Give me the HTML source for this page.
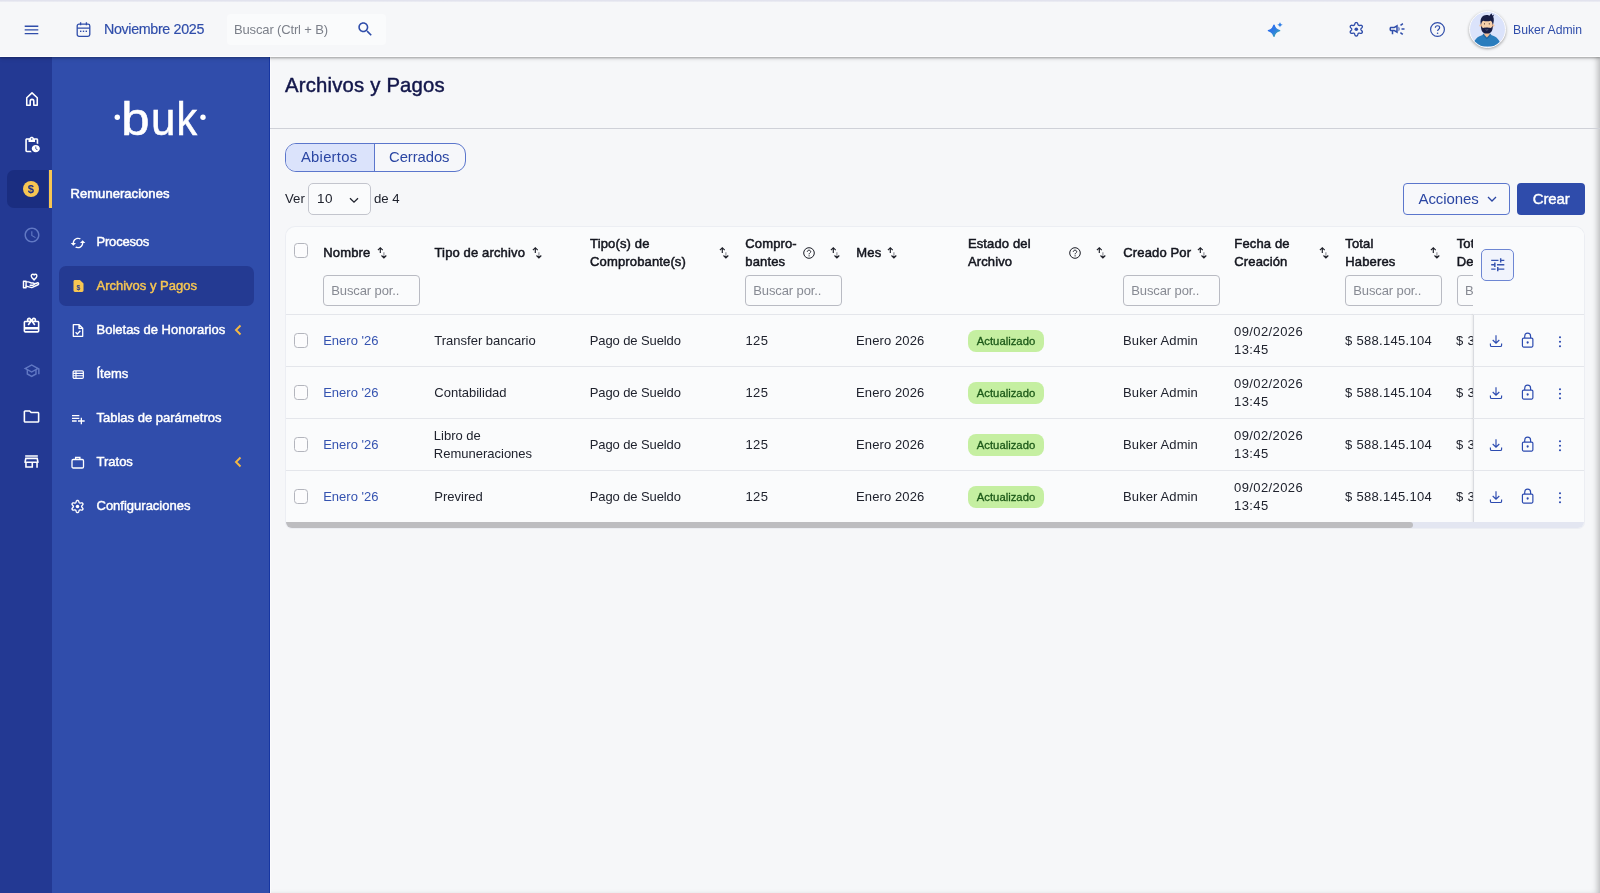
<!DOCTYPE html>
<html lang="es">
<head>
<meta charset="utf-8">
<title>Archivos y Pagos</title>
<style>
*{box-sizing:border-box;margin:0;padding:0}
html,body{width:1600px;height:893px;overflow:hidden}
body{opacity:.9999;font-family:"Liberation Sans",sans-serif;font-size:13px;line-height:18px;color:#20232e;background:#f6f7f9;position:relative}
svg{display:block;position:absolute;overflow:visible}
.t{position:absolute;white-space:nowrap}
.sb{-webkit-text-stroke:.45px currentColor}
.b{-webkit-text-stroke:.55px currentColor}
/* top bar */
#top{position:absolute;left:0;top:0;width:1600px;height:57px;background:#f6f7f9;box-shadow:0 1px 2px rgba(0,0,0,.25),0 2px 4px rgba(0,0,0,.10);z-index:10;color:#2f4daa}
#top .l1{position:absolute;left:0;top:0;width:1600px;height:2px;background:linear-gradient(#e2e3ee 0,#e2e3ee 55%,#f3f4f8 100%)}
#top .l2{position:absolute;left:0;top:56px;width:1600px;height:1px;background:#fdfdfe}
#top .t{will-change:transform}
#search{position:absolute;left:226.500px;top:14px;width:159.500px;height:30.500px;background:#fafbfc;border-radius:4px}
#avatar{position:absolute;left:1469px;top:11px;width:37px;height:37px;border-radius:50%;background:#dbe3fb;border:1.5px solid #fdfdfe;box-shadow:0 1px 3px rgba(0,0,0,.35);overflow:hidden}
/* strip + sidebar */
#strip{position:absolute;left:0;top:57px;width:52px;height:836px;background:#233993}
#side{position:absolute;left:52px;top:57px;width:218px;height:836px;background:#304dab;color:#fff;border-right:1px solid #1636a2;box-shadow:1px 0 0 #fbfbfd}
#strip .act{position:absolute;left:7.300px;top:113px;width:40.700px;height:38px;background:#1a2d80;border-radius:7px 0 0 7px}
#strip .bar{position:absolute;left:49px;top:113px;width:3px;height:38px;background:#f7c652}
#side .sel{position:absolute;left:7px;top:209px;width:195px;height:40px;background:#243a92;border-radius:7px}
#side .t{left:44.500px;font-size:13px}
/* content */
#content{position:absolute;left:270px;top:57px;width:1330px;height:836px;background:#f6f7f9;box-shadow:inset -5px 0 6px -3px rgba(0,0,0,.27)}
#title{left:285px;top:71px;font-size:20.3px;line-height:28px;color:#12164a;letter-spacing:.2px;-webkit-text-stroke:.45px #12164a}
#hr{position:absolute;left:270px;top:128px;width:1330px;height:1px;background:#cfd1d8}
#tabs{position:absolute;left:285px;top:143px;width:181px;height:29px;border:1px solid #5b76cc;border-radius:11px;overflow:hidden;background:#f6f7fa}
#tabs .on{position:absolute;left:0;top:0;width:89px;height:27px;background:#dbe3fb;border-right:1px solid #5b76cc}
.btn{position:absolute;top:183px;height:32px;border-radius:4px}
#card{position:absolute;left:286px;top:227px;width:1298px;height:301px;background:#fafbfc;box-shadow:0 0 0 1px #eceef3;border-radius:9px 9px 6px 6px;overflow:hidden}
.hl{position:absolute;left:0;width:1298px;height:1px;background:#e4e6eb}
.cb{position:absolute;left:7.500px;width:14.500px;height:14.500px;border:1px solid #b3b5bd;border-radius:3.5px;background:#fcfcfd}
.inp{position:absolute;top:48px;width:97px;height:31px;letter-spacing:-.12px;border:1px solid #b9bbc3;border-radius:4px;background:#fafbfc;color:#878a93;padding:6px 0 0 7.300px;white-space:nowrap;overflow:hidden}
.th{position:absolute;white-space:nowrap;color:#14161f;letter-spacing:.14px;-webkit-text-stroke:.5px #14161f}
.td{position:absolute;white-space:nowrap}
.lnk{color:#3553b0}
.badge{position:absolute;left:682px;width:76px;height:22px;border-radius:8px;background:#c5efa1;color:#1d5a19;font-size:11.3px;line-height:22px;text-align:center;-webkit-text-stroke:.3px #1d5a19}
#sticky{position:absolute;left:1187px;top:0;width:111px;height:296px;background:#fafbfc}
#sticky .vl{position:absolute;left:0;top:87px;width:1px;height:209px;background:#d9dbe0;box-shadow:-1px 0 2px rgba(0,0,0,.10)}
#tune{position:absolute;left:8px;top:22px;width:33px;height:32px;border:1px solid #6d86d3;border-radius:5px;background:#f1f4fc}
#sbar{position:absolute;left:0;top:295px;width:1298px;height:7px;background:#e3e6f1}
#sbar i{position:absolute;left:0;top:0;width:1127px;height:6px;border-radius:0 3px 3px 0;background:#bdbdc0}
</style>
</head>
<body>
<div id="content"></div>
<div id="top">
<div class="l1"></div><div class="l2"></div>
<svg style="left:20px;top:18px" width="24" height="24" viewBox="0 0 24 24"><path fill="none" stroke="#2f4daa" stroke-width="1.4" d="M4.7 8.2h13.6M4.7 11.9h13.6M4.7 15.6h13.6"/></svg>
<svg style="left:74px;top:20px" width="20" height="20" viewBox="0 0 20 20"><g fill="none" stroke="#2f4daa" stroke-width="1.3"><rect x="3.2" y="4.1" width="12.6" height="12.2" rx="1.8"/><path d="M3.2 8.1h12.6M6.6 2.3v3M12.4 2.3v3"/></g><g fill="#2f4daa"><rect x="6" y="10.6" width="1.4" height="1.4"/><rect x="8.8" y="10.6" width="1.4" height="1.4"/><rect x="11.6" y="10.6" width="1.4" height="1.4"/></g></svg>
<div class="t" id="month" style="left:104px;top:20px;font-size:14.3px;letter-spacing:-.35px;-webkit-text-stroke:.18px #2f4daa">Noviembre 2025</div>
<div id="search"></div>
<div class="t" id="stext" style="left:234px;top:20.500px;font-size:13px;letter-spacing:-.15px;color:#7c808a">Buscar (Ctrl + B)</div>
<svg style="left:355.500px;top:20.300px" width="18.500" height="18.500" viewBox="0 0 24 24"><path fill="#2f4daa" d="M15.5 14h-.79l-.28-.27C15.41 12.59 16 11.11 16 9.5 16 5.91 13.09 3 9.500 3S3 5.910 3 9.500 5.910 16 9.500 16c1.610 0 3.090-.590 4.230-1.570l.27.280v.790l5 4.990L20.490 19l-4.990-5zm-6 0C7.010 14 5 11.990 5 9.500S7.010 5 9.500 5 14 7.010 14 9.500 11.990 14 9.500 14z"/></svg>
<svg style="left:1265px;top:20px" width="20" height="20" viewBox="0 0 20 20"><defs><linearGradient id="sg" x1="0" y1="0" x2="1" y2="1"><stop offset="0" stop-color="#2563f5"/><stop offset=".55" stop-color="#2f80e0"/><stop offset="1" stop-color="#3fb59a"/></linearGradient></defs><path fill="url(#sg)" d="M9 5.200C9.800 8.200 11.400 9.800 14.600 10.700 11.400 11.600 9.800 13.200 9 16.200 8.200 13.200 6.600 11.600 3.400 10.700 6.600 9.800 8.200 8.200 9 5.200Z" stroke="url(#sg)" stroke-width="1.400" stroke-linejoin="round"/><path fill="#2f7fe6" d="M15 1.900C15.300 3.500 16 4.300 17.800 4.700 16 5.100 15.300 5.900 15 7.500 14.700 5.900 14 5.100 12.200 4.700 14 4.300 14.700 3.500 15 1.900Z"/></svg>
<svg style="left:1348px;top:21.200px" width="16.600" height="16.600" viewBox="0 0 24 24"><path fill="none" stroke="#2f4daa" stroke-width="1.900" stroke-linejoin="round" d="M12.0 2.2L12.8 2.4L13.6 2.9L14.1 4.1L14.4 5.3L14.8 5.9L15.3 6.3L15.9 6.5L16.6 6.5L17.8 6.2L19.1 6.1L19.9 6.5L20.5 7.1L20.8 7.9L20.7 8.8L19.9 9.9L19.0 10.8L18.7 11.4L18.6 12.0L18.7 12.6L19.0 13.2L19.9 14.1L20.7 15.2L20.8 16.1L20.5 16.9L19.9 17.5L19.1 17.9L17.8 17.8L16.6 17.5L15.9 17.5L15.3 17.7L14.8 18.1L14.4 18.7L14.1 19.9L13.6 21.1L12.8 21.6L12.0 21.8L11.2 21.6L10.4 21.1L9.9 19.9L9.6 18.7L9.2 18.1L8.7 17.7L8.1 17.5L7.4 17.5L6.2 17.8L4.9 17.9L4.1 17.5L3.5 16.9L3.2 16.1L3.3 15.2L4.1 14.1L5.0 13.2L5.3 12.6L5.4 12.0L5.3 11.4L5.0 10.8L4.1 9.9L3.3 8.8L3.2 7.9L3.5 7.1L4.1 6.5L4.9 6.1L6.2 6.2L7.4 6.5L8.1 6.5L8.7 6.3L9.2 5.9L9.6 5.3L9.9 4.1L10.4 2.9L11.2 2.4Z"/><circle cx="12" cy="12" r="2.600" fill="#2f4daa"/></svg>
<svg style="left:1388px;top:20px" width="18" height="18" viewBox="0 0 24 24"><path fill="#2f4daa" d="M18 11v2h4v-2h-4zm-2 6.610c.960.710 2.210 1.650 3.200 2.390.4-.530.8-1.070 1.200-1.600-.990-.740-2.240-1.680-3.200-2.400-.4.540-.8 1.080-1.200 1.610zM20.400 5.600c-.4-.530-.8-1.070-1.200-1.600-.990.740-2.240 1.680-3.200 2.400.4.530.8 1.070 1.200 1.600.960-.720 2.210-1.650 3.200-2.400zM4 9c-1.100 0-2 .9-2 2v2c0 1.100.9 2 2 2h1v4h2v-4h1l5 3V6L8 9H4zm5.030 1.710L11 9.530v4.940l-1.970-1.180-.480-.290H4v-2h4.550l.480-.290zM15.500 12c0-1.330-.580-2.530-1.500-3.350v6.690c.920-.810 1.500-2.010 1.500-3.340z"/></svg>
<svg style="left:1428px;top:20px" width="19" height="19" viewBox="0 0 24 24"><circle cx="12" cy="12" r="8.700" fill="none" stroke="#2f4daa" stroke-width="1.500"/><path fill="none" stroke="#2f4daa" stroke-width="1.500" d="M9.300 9.900c0-1.600 1.200-2.600 2.700-2.600s2.700 1 2.700 2.400c0 1.900-2.600 2.100-2.600 4.300"/><circle cx="12.100" cy="16.700" r="1" fill="#2f4daa"/></svg>
<div id="avatar"><svg style="left:0;top:0" width="34" height="34" viewBox="0 0 34 34"><path fill="#2a7dbd" d="M3 34.500c.4-6.400 4.300-10.200 9.600-11.600l4.300 2.600 4.300-2.600c5.300 1.400 9.200 5.200 9.600 11.600z"/><path fill="#1f66a3" d="M12.400 23l4.500 4.300 4.500-4.300-1.300-1.500h-6.400z"/><path fill="#f0bf98" d="M14.300 18.500h5.200v4.300l-2.600 2.600-2.600-2.600z"/><rect x="11.100" y="6" width="11.600" height="14" rx="5" fill="#f6cfa9"/><circle cx="10.700" cy="13.500" r="1.300" fill="#f0bd95"/><circle cx="23.100" cy="13.500" r="1.300" fill="#f0bd95"/><path fill="#171d45" d="M11.100 13.200c-.3 4.700 1 8.400 5.800 8.400s6.100-3.700 5.800-8.400c-.5 1.600-1.300 2.500-2.300 2.800-1.500-.8-5.500-.8-7 0-1-.3-1.800-1.200-2.300-2.800z"/><path fill="#171d45" d="M11 13.300C9.500 7.500 11.600 3 16.600 3c1.400 0 2.300.3 3 .8.400-1.300 1.300-2.100 2.600-2.400-.4.800-.4 1.500-.1 2.100.6-.6 1.300-.9 2.200-.8-.8.600-1.100 1.300-1.100 2.100 1 2.200.8 5.100-.4 8.500-.3-2.100-.8-3.600-2-4.500-2.500.7-5.300.7-7.700 0-1.200.9-1.800 2.400-2.100 4.500z"/><circle cx="14.500" cy="11.800" r=".6" fill="#3a2a2a"/><circle cx="19.300" cy="11.800" r=".6" fill="#3a2a2a"/><path fill="#dfe6f2" d="M15.300 17.500c1 .6 2.200.6 3.200 0-.5.900-2.700.9-3.200 0z"/></svg></div>
<div class="t" id="uname" style="left:1513px;top:21px;font-size:12.2px">Buker Admin</div>
</div>
<div id="strip">
<div class="act"></div><div class="bar"></div>
<svg style="left:22.600px;top:33.300px" width="18" height="18" viewBox="0 0 24 24"><path fill="none" stroke="#fff" stroke-width="2.100" stroke-linejoin="round" d="M5 10.300L12 3.800l7 6.500V20.300h-4.600v-5.400c0-1.400-1-2.400-2.400-2.400s-2.400 1-2.400 2.400v5.400H5z"/></svg>
<svg style="left:21.500px;top:78.800px" width="19.500" height="17.800" viewBox="0 0 24 24" preserveAspectRatio="none"><path fill="#fff" d="M17 12c-2.760 0-5 2.240-5 5s2.240 5 5 5 5-2.240 5-5-2.240-5-5-5zm1.650 7.350L16.500 17.200V14h1v2.790l1.850 1.850-.7.710zM18 3h-3.180C14.400 1.840 13.300 1 12 1s-2.400.840-2.820 2H6c-1.100 0-2 .9-2 2v15c0 1.100.9 2 2 2h6.110c-.590-.570-1.070-1.250-1.420-2H6V5h2v3h8V5h2v5.080c.710.100 1.380.310 2 .6V5c0-1.100-.9-2-2-2zm-6 2c-.550 0-1-.450-1-1s.450-1 1-1 1 .450 1 1-.450 1-1 1z"/></svg>
<svg style="left:23.100px;top:123.900px" width="16" height="16" viewBox="0 0 16 16"><circle cx="8" cy="8" r="8" fill="#f7c652"/><text x="8" y="12" text-anchor="middle" font-family="Liberation Sans, sans-serif" font-size="11.300" font-weight="bold" fill="#1f3186">$</text></svg>
<svg style="left:22.500px;top:169.200px" width="18" height="18" viewBox="0 0 24 24"><path fill="#6178c4" d="M11.990 2C6.470 2 2 6.480 2 12s4.470 10 9.990 10C17.520 22 22 17.520 22 12S17.520 2 11.990 2zM12 20c-4.420 0-8-3.580-8-8s3.580-8 8-8 8 3.580 8 8-3.580 8-8 8zm.5-13H11v6l5.250 3.150.75-1.230-4.500-2.670z"/></svg>
<svg style="left:22.300px;top:214.700px" width="17.800" height="18.500" preserveAspectRatio="none" viewBox="0 0 24 24"><g fill="none" stroke="#fff" stroke-width="1.900" stroke-linejoin="round" stroke-linecap="round"><path d="M16.300 10.200c-1.900-1.700-3.800-3.300-3.800-5.100 0-1.300 1-2.200 2.100-2.200.8 0 1.400.4 1.700 1 .3-.6.900-1 1.700-1 1.100 0 2.100.9 2.100 2.200 0 1.800-1.900 3.400-3.800 5.100z"/><rect x="2" y="12" width="3.500" height="8.500"/><path d="M5.500 12.800h3.200c1.500 0 2.300 1.500 4 1.500h2.300c.9 0 1.500.6 1.500 1.400s-.6 1.400-1.500 1.400h-4"/><path d="M16.500 15.600l4-1.400c.8-.3 1.600.1 1.900.8.200.6-.1 1.300-.8 1.600l-7.600 3.300c-.7.300-1.400.3-2.100.1l-6.400-1.700"/></g></svg>
<svg style="left:22.200px;top:259.300px" width="19" height="19" viewBox="0 0 24 24"><path fill="#fff" d="M20 6h-2.180c.110-.310.180-.650.180-1 0-1.660-1.340-3-3-3-1.050 0-1.960.540-2.500 1.350l-.5.670-.5-.680C10.960 2.540 10.050 2 9 2 7.340 2 6 3.340 6 5c0 .350.070.690.180 1H4c-1.110 0-1.990.890-1.990 2L2 19c0 1.110.890 2 2 2h16c1.110 0 2-.890 2-2V8c0-1.110-.890-2-2-2zm-5-2c.550 0 1 .450 1 1s-.450 1-1 1-1-.450-1-1 .450-1 1-1zM9 4c.550 0 1 .450 1 1s-.450 1-1 1-1-.450-1-1 .450-1 1-1zm11 15H4v-2h16v2zm0-5H4V8h5.080L7 10.830 8.620 12 11 8.760l1-1.360 1 1.360L15.380 12 17 10.830 14.920 8H20v6z"/></svg>
<svg style="left:23.200px;top:304.800px" width="17.300" height="17.300" viewBox="0 0 24 24"><path fill="#6178c4" d="M12 3L1 9l4 2.180v6L12 21l7-3.820v-6l2-1.090V17h2V9L12 3zm6.820 6L12 12.720 5.180 9 12 5.280 18.820 9zM17 15.990l-5 2.730-5-2.730v-3.720L12 15l5-2.730v3.720z"/></svg>
<svg style="left:22.200px;top:349.800px" width="19" height="19" viewBox="0 0 24 24"><path fill="#fff" d="M9.170 6l2 2H20v10H4V6h5.170M10 4H4c-1.100 0-1.990.9-1.990 2L2 18c0 1.100.9 2 2 2h16c1.100 0 2-.9 2-2V8c0-1.100-.9-2-2-2h-8l-2-2z"/></svg>
<svg style="left:22.200px;top:394.600px" width="19" height="19" viewBox="0 0 24 24"><path fill="#fff" d="M18.360 9l.6 3H5.040l.6-3h12.720M20 4H4v2h16V4zm0 3H4l-1 5v2h1v6h10v-6h4v6h2v-6h1v-2l-1-5zM6 18v-4h6v4H6z"/></svg>
</div>
<div id="side">
<div class="sel"></div>
<svg style="left:51px;top:33px" width="120" height="56" viewBox="0 0 120 56"><circle cx="14.300" cy="27.300" r="2.700" fill="#fff"/><circle cx="100" cy="27.300" r="2.700" fill="#fff"/><g id="logo" font-family="Liberation Sans, sans-serif" font-size="46.300" fill="#fff" stroke="#fff" stroke-width=".55"><text transform="translate(18.200 44.600) scale(1.100 1)">b</text><text transform="translate(48.100 44.600) scale(.950 1)">u</text><text transform="translate(73.400 44.600) scale(.890 1)">k</text></g></svg>
<div class="t b" id="rem" style="left:18.500px;top:128.300px;letter-spacing:.05px">Remuneraciones</div>
<svg style="left:17.500px;top:177.500px" width="16" height="16" viewBox="0 0 24 24"><path fill="#fff" d="M19 8l-4 4h3c0 3.310-2.690 6-6 6-1.010 0-1.970-.250-2.800-.7l-1.460 1.460C8.970 19.540 10.430 20 12 20c4.420 0 8-3.580 8-8h3l-4-4zM6 12c0-3.310 2.690-6 6-6 1.010 0 1.970.250 2.800.7l1.460-1.460C15.030 4.460 13.570 4 12 4c-4.420 0-8 3.580-8 8H1l4 4 4-4H6z"/></svg>
<div class="t sb" style="top:176px;letter-spacing:-.2px">Procesos</div>
<svg style="left:19.500px;top:222.300px" width="13" height="14" viewBox="0 0 14 15"><path fill="#f7c652" d="M3.200 1h5.300L12.400 4.900V12.400c0 .9-.7 1.600-1.600 1.600H3.200c-.9 0-1.600-.7-1.600-1.600V2.600C1.600 1.700 2.300 1 3.200 1z"/><text x="7" y="11.600" text-anchor="middle" font-family="Liberation Sans, sans-serif" font-size="7.500" font-weight="bold" fill="#243a92">$</text></svg>
<div class="t sb" style="top:220px;color:#f7c652">Archivos y Pagos</div>
<svg style="left:19px;top:266px" width="14" height="15" viewBox="0 0 14 15"><path fill="none" stroke="#fff" stroke-width="1.300" stroke-linejoin="round" d="M2.300 1.700h5.900l3.500 3.500v8.100H2.300zM8 1.900v3.500h3.500"/><path fill="none" stroke="#fff" stroke-width="1.300" d="M4.600 9.300l1.700 1.700 3.100-3.300"/></svg>
<div class="t sb" style="top:264px">Boletas de Honorarios</div>
<svg style="left:181.300px;top:267px" width="10" height="12" viewBox="0 0 10 12"><path fill="none" stroke="#f5b942" stroke-width="1.900" d="M7.500 1.500L3 6l4.500 4.500"/></svg>
<svg style="left:19.500px;top:311.500px" width="13" height="11.200" viewBox="0 0 14 12"><rect x="1.200" y="2" width="11" height="8" rx="1.200" fill="none" stroke="#fff" stroke-width="1.300"/><path stroke="#fff" stroke-width="1.200" d="M1.200 4.700h11M1.200 7.300h11M4.300 2v8"/></svg>
<div class="t sb" style="top:308px">Ítems</div>
<svg style="left:18px;top:354px" width="16" height="16" viewBox="0 0 24 24"><path fill="#fff" d="M14 10H3v2h11v-2zm0-4H3v2h11V6zm4 8v-4h-2v4h-4v2h4v4h2v-4h4v-2h-4zM3 16h7v-2H3v2z"/></svg>
<div class="t sb" style="top:352px">Tablas de parámetros</div>
<svg style="left:18px;top:398px" width="16" height="15" viewBox="0 0 16 15"><rect x="2" y="4.500" width="11.500" height="8.500" rx="1.200" fill="none" stroke="#fff" stroke-width="1.300"/><path fill="none" stroke="#fff" stroke-width="1.300" d="M5.600 4.500V2.500h4.300v2"/></svg>
<div class="t sb" style="top:396px">Tratos</div>
<svg style="left:181.300px;top:399px" width="10" height="12" viewBox="0 0 10 12"><path fill="none" stroke="#f5b942" stroke-width="1.900" d="M7.500 1.500L3 6l4.500 4.500"/></svg>
<svg style="left:18px;top:442px" width="15" height="15" viewBox="0 0 24 24"><path fill="none" stroke="#fff" stroke-width="2.100" stroke-linejoin="round" d="M12.0 2.2L12.8 2.4L13.6 2.9L14.1 4.1L14.4 5.3L14.8 5.9L15.3 6.3L15.9 6.5L16.6 6.5L17.8 6.2L19.1 6.1L19.9 6.5L20.5 7.1L20.8 7.9L20.7 8.8L19.9 9.9L19.0 10.8L18.7 11.4L18.6 12.0L18.7 12.6L19.0 13.2L19.9 14.1L20.7 15.2L20.8 16.1L20.5 16.9L19.9 17.5L19.1 17.9L17.8 17.8L16.6 17.5L15.9 17.5L15.3 17.7L14.8 18.1L14.4 18.7L14.1 19.9L13.6 21.1L12.8 21.6L12.0 21.8L11.2 21.6L10.4 21.1L9.9 19.9L9.6 18.7L9.2 18.1L8.7 17.7L8.1 17.5L7.4 17.5L6.2 17.8L4.9 17.9L4.1 17.5L3.5 16.9L3.2 16.1L3.3 15.2L4.1 14.1L5.0 13.2L5.3 12.6L5.4 12.0L5.3 11.4L5.0 10.8L4.1 9.9L3.3 8.8L3.2 7.9L3.5 7.1L4.1 6.5L4.9 6.1L6.2 6.2L7.4 6.5L8.1 6.5L8.7 6.3L9.2 5.9L9.6 5.3L9.9 4.1L10.4 2.9L11.2 2.4Z"/><circle cx="12" cy="12" r="2.800" fill="#fff"/></svg>
<div class="t sb" style="top:440px">Configuraciones</div>
</div>
<div class="t" id="title">Archivos y Pagos</div>
<div id="hr"></div>
<div id="tabs"><div class="on"></div><div class="t blue" id="tab1" style="left:15px;top:4px;font-size:14.8px;letter-spacing:.25px;color:#2b46a3">Abiertos</div><div class="t" id="tab2" style="left:103px;top:4px;font-size:14.8px;letter-spacing:-.05px;color:#2b46a3">Cerrados</div></div>
<div class="t" id="ver" style="left:285px;top:189.500px;font-size:13.2px">Ver</div>
<div id="sel" style="position:absolute;left:308px;top:183px;width:63px;height:32px;border:1px solid #c3c5cd;border-radius:5px;background:#fafbfc"><div class="t" style="left:8px;top:6px;font-size:13.5px;letter-spacing:.4px">10</div><svg style="left:40px;top:12.500px" width="10" height="7" viewBox="0 0 10 7"><path fill="none" stroke="#20232e" stroke-width="1.300" d="M1 1.200l4 4 4-4"/></svg></div>
<div class="t" id="de4" style="left:374px;top:189.500px;font-size:13.2px">de 4</div>
<div class="btn" id="acc" style="left:1403px;width:107px;border:1px solid #5b76cc;background:#f7f8fb"><div class="t" id="acct" style="left:14.500px;top:5.500px;font-size:15px;letter-spacing:-.1px;color:#2b46a3">Acciones</div><svg style="left:83px;top:12px" width="10" height="7" viewBox="0 0 10 7"><path fill="none" stroke="#2b46a3" stroke-width="1.300" d="M1 1l4 4 4-4"/></svg></div>
<div class="btn" id="crear" style="left:1517px;width:68px;background:#2f4cab"><div class="t" id="creart" style="left:15.800px;top:6.500px;font-size:15px;letter-spacing:-.15px;color:#fff;-webkit-text-stroke:.4px #fff">Crear</div></div>
<div id="card"><div class="cb" style="top:16px"></div>
<div class="th" style="left:37.3px;top:17px">Nombre</div>
<svg style="left:91.2px;top:20px" width="10" height="12" viewBox="0 0 10 12"><g fill="none" stroke-width="1.15"><path stroke="#1b1d26" d="M3.300 6V.7M.9 3.100L3.300 .7 5.700 3.100"/><path stroke="#8d8f96" d="M6.900 5.200v4"/><path stroke="#1b1d26" d="M6.900 9v1.900M4.500 8.500l2.400 2.400 2.400-2.400"/></g></svg>
<div class="th" style="left:148.5px;top:17px">Tipo de archivo</div>
<svg style="left:245.9px;top:20px" width="10" height="12" viewBox="0 0 10 12"><g fill="none" stroke-width="1.15"><path stroke="#1b1d26" d="M3.300 6V.7M.9 3.100L3.300 .7 5.700 3.100"/><path stroke="#8d8f96" d="M6.900 5.200v4"/><path stroke="#1b1d26" d="M6.900 9v1.900M4.500 8.500l2.400 2.400 2.400-2.400"/></g></svg>
<div class="th" style="left:304.1px;top:7.500px">Tipo(s) de<br>Comprobante(s)</div>
<svg style="left:432.9px;top:20px" width="10" height="12" viewBox="0 0 10 12"><g fill="none" stroke-width="1.15"><path stroke="#1b1d26" d="M3.300 6V.7M.9 3.100L3.300 .7 5.700 3.100"/><path stroke="#8d8f96" d="M6.900 5.200v4"/><path stroke="#1b1d26" d="M6.900 9v1.900M4.500 8.500l2.400 2.400 2.400-2.400"/></g></svg>
<div class="th" style="left:459.3px;top:7.500px">Compro-<br>bantes</div>
<svg style="left:516.5px;top:20px" width="12" height="12" viewBox="0 0 12 12"><circle cx="6" cy="6" r="5.300" fill="none" stroke="#1b1d26" stroke-width="1"/><path fill="none" stroke="#1b1d26" stroke-width="1" d="M4.300 4.800c0-1 .8-1.600 1.700-1.600s1.700.6 1.700 1.500c0 1.200-1.600 1.300-1.600 2.600"/><circle cx="6.100" cy="8.800" r=".65" fill="#1b1d26"/></svg>
<svg style="left:543.9px;top:20px" width="10" height="12" viewBox="0 0 10 12"><g fill="none" stroke-width="1.15"><path stroke="#1b1d26" d="M3.300 6V.7M.9 3.100L3.300 .7 5.700 3.100"/><path stroke="#8d8f96" d="M6.900 5.200v4"/><path stroke="#1b1d26" d="M6.900 9v1.900M4.500 8.500l2.400 2.400 2.400-2.400"/></g></svg>
<div class="th" style="left:570.3px;top:17px">Mes</div>
<svg style="left:600.9px;top:20px" width="10" height="12" viewBox="0 0 10 12"><g fill="none" stroke-width="1.15"><path stroke="#1b1d26" d="M3.300 6V.7M.9 3.100L3.300 .7 5.700 3.100"/><path stroke="#8d8f96" d="M6.900 5.200v4"/><path stroke="#1b1d26" d="M6.900 9v1.900M4.500 8.500l2.400 2.400 2.400-2.400"/></g></svg>
<div class="th" style="left:681.9px;top:7.500px">Estado del<br>Archivo</div>
<svg style="left:783.3px;top:20px" width="12" height="12" viewBox="0 0 12 12"><circle cx="6" cy="6" r="5.300" fill="none" stroke="#1b1d26" stroke-width="1"/><path fill="none" stroke="#1b1d26" stroke-width="1" d="M4.300 4.800c0-1 .8-1.600 1.700-1.600s1.700.6 1.700 1.500c0 1.200-1.600 1.300-1.600 2.600"/><circle cx="6.100" cy="8.800" r=".65" fill="#1b1d26"/></svg>
<svg style="left:809.9px;top:20px" width="10" height="12" viewBox="0 0 10 12"><g fill="none" stroke-width="1.15"><path stroke="#1b1d26" d="M3.300 6V.7M.9 3.100L3.300 .7 5.700 3.100"/><path stroke="#8d8f96" d="M6.900 5.200v4"/><path stroke="#1b1d26" d="M6.900 9v1.900M4.500 8.500l2.400 2.400 2.400-2.400"/></g></svg>
<div class="th" style="left:837.3px;top:17px">Creado Por</div>
<svg style="left:910.9px;top:20px" width="10" height="12" viewBox="0 0 10 12"><g fill="none" stroke-width="1.15"><path stroke="#1b1d26" d="M3.300 6V.7M.9 3.100L3.300 .7 5.700 3.100"/><path stroke="#8d8f96" d="M6.900 5.200v4"/><path stroke="#1b1d26" d="M6.900 9v1.900M4.500 8.500l2.400 2.400 2.400-2.400"/></g></svg>
<div class="th" style="left:948.3px;top:7.500px">Fecha de<br>Creación</div>
<svg style="left:1032.9px;top:20px" width="10" height="12" viewBox="0 0 10 12"><g fill="none" stroke-width="1.15"><path stroke="#1b1d26" d="M3.300 6V.7M.9 3.100L3.300 .7 5.700 3.100"/><path stroke="#8d8f96" d="M6.900 5.200v4"/><path stroke="#1b1d26" d="M6.900 9v1.900M4.500 8.500l2.400 2.400 2.400-2.400"/></g></svg>
<div class="th" style="left:1059.3px;top:7.500px">Total<br>Haberes</div>
<svg style="left:1143.6px;top:20px" width="10" height="12" viewBox="0 0 10 12"><g fill="none" stroke-width="1.15"><path stroke="#1b1d26" d="M3.300 6V.7M.9 3.100L3.300 .7 5.700 3.100"/><path stroke="#8d8f96" d="M6.900 5.200v4"/><path stroke="#1b1d26" d="M6.900 9v1.900M4.500 8.500l2.400 2.400 2.400-2.400"/></g></svg>
<div class="th" style="left:1170.7px;top:7.500px">Total<br>Descuentos</div>
<div class="inp" style="left:37px">Buscar por..</div>
<div class="inp" style="left:459px">Buscar por..</div>
<div class="inp" style="left:837px">Buscar por..</div>
<div class="inp" style="left:1059px">Buscar por..</div>
<div class="inp" style="left:1170.6px">Buscar por..</div>
<div class="hl" style="top:87px"></div>
<div class="cb" style="top:106px"></div>
<div class="td lnk" style="left:37.200px;top:104.5px">Enero '26</div>
<div class="td" style="left:148.300px;top:104.5px">Transfer bancario</div>
<div class="td" style="left:303.700px;top:104.5px;letter-spacing:-.1px">Pago de Sueldo</div>
<div class="td" style="left:459.400px;top:104.5px;letter-spacing:.4px">125</div>
<div class="td" style="left:570.100px;top:104.5px;letter-spacing:.1px">Enero 2026</div>
<div class="badge" style="top:103.0px">Actualizado</div>
<div class="td" style="left:837.100px;top:104.5px;letter-spacing:.1px">Buker Admin</div>
<div class="td" style="left:948px;top:95.5px;letter-spacing:.4px">09/02/2026<br>13:45</div>
<div class="td" style="left:1059px;top:104.5px;letter-spacing:.3px">$ 588.145.104</div>
<div class="td" style="left:1170px;top:104.5px;letter-spacing:.3px">$ 389.204.551</div>
<div class="hl" style="top:139px"></div>
<div class="cb" style="top:158px"></div>
<div class="td lnk" style="left:37.200px;top:156.5px">Enero '26</div>
<div class="td" style="left:148.300px;top:156.5px">Contabilidad</div>
<div class="td" style="left:303.700px;top:156.5px;letter-spacing:-.1px">Pago de Sueldo</div>
<div class="td" style="left:459.400px;top:156.5px;letter-spacing:.4px">125</div>
<div class="td" style="left:570.100px;top:156.5px;letter-spacing:.1px">Enero 2026</div>
<div class="badge" style="top:155.0px">Actualizado</div>
<div class="td" style="left:837.100px;top:156.5px;letter-spacing:.1px">Buker Admin</div>
<div class="td" style="left:948px;top:147.5px;letter-spacing:.4px">09/02/2026<br>13:45</div>
<div class="td" style="left:1059px;top:156.5px;letter-spacing:.3px">$ 588.145.104</div>
<div class="td" style="left:1170px;top:156.5px;letter-spacing:.3px">$ 389.204.551</div>
<div class="hl" style="top:191px"></div>
<div class="cb" style="top:210px"></div>
<div class="td lnk" style="left:37.200px;top:208.5px">Enero '26</div>
<div class="td" style="left:147.800px;top:199.5px">Libro de<br>Remuneraciones</div>
<div class="td" style="left:303.700px;top:208.5px;letter-spacing:-.1px">Pago de Sueldo</div>
<div class="td" style="left:459.400px;top:208.5px;letter-spacing:.4px">125</div>
<div class="td" style="left:570.100px;top:208.5px;letter-spacing:.1px">Enero 2026</div>
<div class="badge" style="top:207.0px">Actualizado</div>
<div class="td" style="left:837.100px;top:208.5px;letter-spacing:.1px">Buker Admin</div>
<div class="td" style="left:948px;top:199.5px;letter-spacing:.4px">09/02/2026<br>13:45</div>
<div class="td" style="left:1059px;top:208.5px;letter-spacing:.3px">$ 588.145.104</div>
<div class="td" style="left:1170px;top:208.5px;letter-spacing:.3px">$ 389.204.551</div>
<div class="hl" style="top:243px"></div>
<div class="cb" style="top:262px"></div>
<div class="td lnk" style="left:37.200px;top:260.5px">Enero '26</div>
<div class="td" style="left:148.300px;top:260.5px">Previred</div>
<div class="td" style="left:303.700px;top:260.5px;letter-spacing:-.1px">Pago de Sueldo</div>
<div class="td" style="left:459.400px;top:260.5px;letter-spacing:.4px">125</div>
<div class="td" style="left:570.100px;top:260.5px;letter-spacing:.1px">Enero 2026</div>
<div class="badge" style="top:259.0px">Actualizado</div>
<div class="td" style="left:837.100px;top:260.5px;letter-spacing:.1px">Buker Admin</div>
<div class="td" style="left:948px;top:251.5px;letter-spacing:.4px">09/02/2026<br>13:45</div>
<div class="td" style="left:1059px;top:260.5px;letter-spacing:.3px">$ 588.145.104</div>
<div class="td" style="left:1170px;top:260.5px;letter-spacing:.3px">$ 389.204.551</div>
<div id="sticky"><div class="vl"></div><div id="tune"><svg style="left:6.600px;top:6.200px" width="17.500" height="17.500" viewBox="0 0 24 24"><path fill="#3553b0" d="M3 17v2h6v-2H3zM3 5v2h10V5H3zm10 16v-2h8v-2h-8v-2h-2v6h2zM7 9v2H3v2h4v2h2V9H7zm14 4v-2H11v2h10zm-6-4h2V7h4V5h-4V3h-2v6z"/></svg></div><div class="hl" style="top:87px;width:113px"></div><svg style="left:15.800px;top:106.8px" width="14" height="14" viewBox="0 0 14 14"><g fill="none" stroke="#2c4bb0" stroke-width="1.150"><path d="M7 1.300v7.800M3.700 6L7 9.200 10.300 6"/><path d="M1.400 9.500v1.700c0 .8.600 1.300 1.300 1.300h8.600c.7 0 1.300-.5 1.300-1.300V9.500"/></g></svg><svg style="left:47.600px;top:105.2px" width="13.300" height="16" viewBox="0 0 14 16" preserveAspectRatio="none"><g fill="none" stroke="#2c4bb0" stroke-width="1.250"><rect x="1.500" y="6" width="11" height="9" rx="1.200"/><path d="M3.900 6V4.300a3.100 3.100 0 0 1 6.200 0V6"/></g><circle cx="7" cy="10.500" r="1.150" fill="#2c4bb0"/></svg><svg style="left:85px;top:108px" width="4" height="14" viewBox="0 0 4 14"><g fill="#2c4bb0"><circle cx="2" cy="2.200" r="1.050"/><circle cx="2" cy="6.700" r="1.050"/><circle cx="2" cy="11.200" r="1.050"/></g></svg><div class="hl" style="top:139px;width:113px"></div><svg style="left:15.800px;top:158.8px" width="14" height="14" viewBox="0 0 14 14"><g fill="none" stroke="#2c4bb0" stroke-width="1.150"><path d="M7 1.300v7.800M3.700 6L7 9.200 10.300 6"/><path d="M1.400 9.500v1.700c0 .8.600 1.300 1.300 1.300h8.600c.7 0 1.300-.5 1.300-1.300V9.500"/></g></svg><svg style="left:47.600px;top:157.2px" width="13.300" height="16" viewBox="0 0 14 16" preserveAspectRatio="none"><g fill="none" stroke="#2c4bb0" stroke-width="1.250"><rect x="1.500" y="6" width="11" height="9" rx="1.200"/><path d="M3.900 6V4.300a3.100 3.100 0 0 1 6.200 0V6"/></g><circle cx="7" cy="10.500" r="1.150" fill="#2c4bb0"/></svg><svg style="left:85px;top:160px" width="4" height="14" viewBox="0 0 4 14"><g fill="#2c4bb0"><circle cx="2" cy="2.200" r="1.050"/><circle cx="2" cy="6.700" r="1.050"/><circle cx="2" cy="11.200" r="1.050"/></g></svg><div class="hl" style="top:191px;width:113px"></div><svg style="left:15.800px;top:210.8px" width="14" height="14" viewBox="0 0 14 14"><g fill="none" stroke="#2c4bb0" stroke-width="1.150"><path d="M7 1.300v7.800M3.700 6L7 9.200 10.300 6"/><path d="M1.400 9.500v1.700c0 .8.600 1.300 1.300 1.300h8.600c.7 0 1.300-.5 1.300-1.300V9.500"/></g></svg><svg style="left:47.600px;top:209.2px" width="13.300" height="16" viewBox="0 0 14 16" preserveAspectRatio="none"><g fill="none" stroke="#2c4bb0" stroke-width="1.250"><rect x="1.500" y="6" width="11" height="9" rx="1.200"/><path d="M3.900 6V4.300a3.100 3.100 0 0 1 6.200 0V6"/></g><circle cx="7" cy="10.500" r="1.150" fill="#2c4bb0"/></svg><svg style="left:85px;top:212px" width="4" height="14" viewBox="0 0 4 14"><g fill="#2c4bb0"><circle cx="2" cy="2.200" r="1.050"/><circle cx="2" cy="6.700" r="1.050"/><circle cx="2" cy="11.200" r="1.050"/></g></svg><div class="hl" style="top:243px;width:113px"></div><svg style="left:15.800px;top:262.8px" width="14" height="14" viewBox="0 0 14 14"><g fill="none" stroke="#2c4bb0" stroke-width="1.150"><path d="M7 1.300v7.800M3.700 6L7 9.200 10.300 6"/><path d="M1.400 9.500v1.700c0 .8.600 1.300 1.300 1.300h8.600c.7 0 1.300-.5 1.300-1.300V9.500"/></g></svg><svg style="left:47.600px;top:261.2px" width="13.300" height="16" viewBox="0 0 14 16" preserveAspectRatio="none"><g fill="none" stroke="#2c4bb0" stroke-width="1.250"><rect x="1.500" y="6" width="11" height="9" rx="1.200"/><path d="M3.900 6V4.300a3.100 3.100 0 0 1 6.200 0V6"/></g><circle cx="7" cy="10.500" r="1.150" fill="#2c4bb0"/></svg><svg style="left:85px;top:264px" width="4" height="14" viewBox="0 0 4 14"><g fill="#2c4bb0"><circle cx="2" cy="2.200" r="1.050"/><circle cx="2" cy="6.700" r="1.050"/><circle cx="2" cy="11.200" r="1.050"/></g></svg></div>
<div id="sbar"><i></i></div></div>
</body>
</html>
